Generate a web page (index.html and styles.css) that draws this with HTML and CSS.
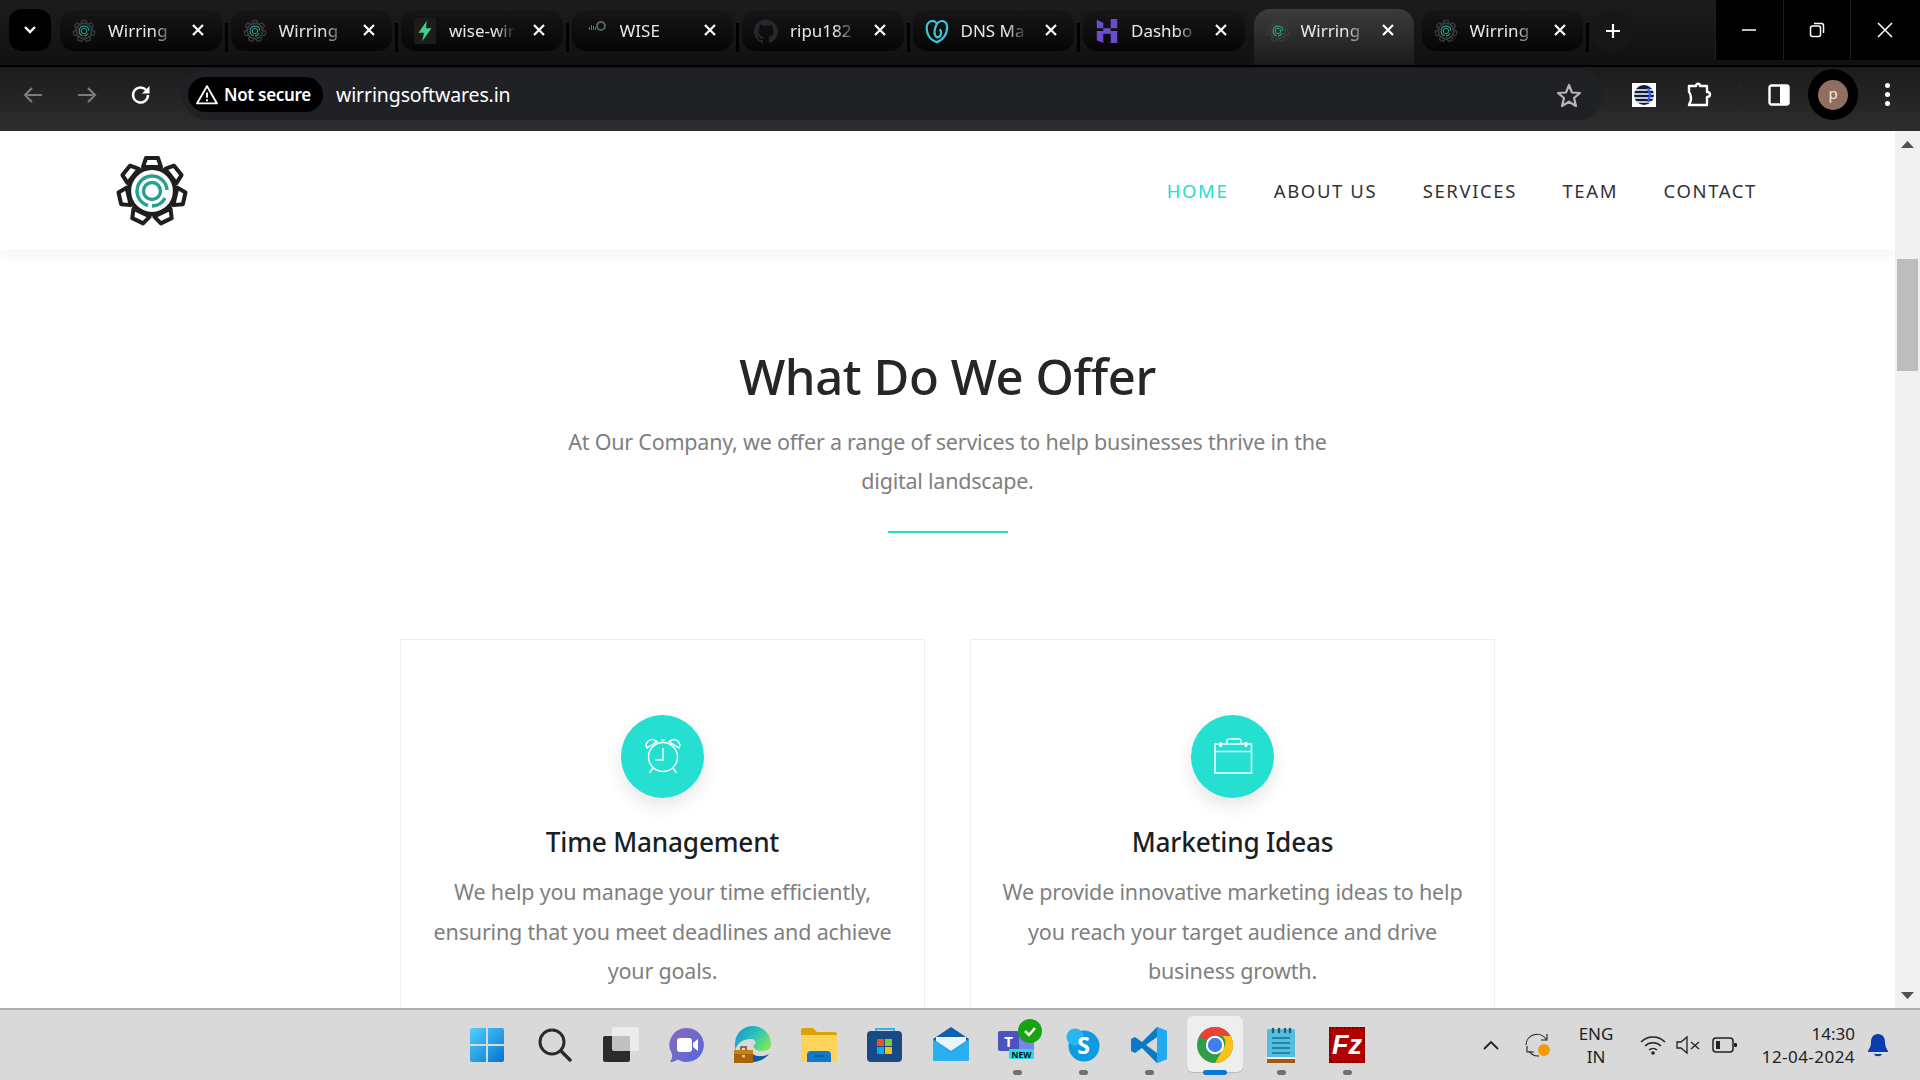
FILE: index.html
```html
<!DOCTYPE html>
<html lang="en">
<head>
<meta charset="utf-8">
<title>Wirring Softwares</title>
<link rel="stylesheet" href="styles.css">
</head>
<body>
<svg class="defs" width="0" height="0" aria-hidden="true">
  <defs>
    <g id="tooth"><polygon points="-9,-24 -6,-33 6,-33 9,-24" fill="none" stroke="currentColor" stroke-width="4" stroke-linejoin="round"/></g>
    <symbol id="gear" viewBox="-37 -37 74 74">
      <g class="gear-dark">
        <use href="#tooth"/><use href="#tooth" transform="rotate(51.4)"/><use href="#tooth" transform="rotate(102.9)"/><use href="#tooth" transform="rotate(154.3)"/><use href="#tooth" transform="rotate(205.7)"/><use href="#tooth" transform="rotate(257.1)"/><use href="#tooth" transform="rotate(308.6)"/>
        <circle r="23" fill="none" stroke="currentColor" stroke-width="4.200"/>
      </g>
      <circle r="8.5" fill="none" stroke="#26a08f" stroke-width="3.400"/>
      <path d="M-4 14.5A15 15 0 1 1 15 -1" fill="none" stroke="#26a08f" stroke-width="3.400"/>
      <path d="M13 7A15 15 0 0 1 0 15" fill="none" stroke="#26a08f" stroke-width="3.400"/>
    </symbol>
    <symbol id="close" viewBox="0 0 14 14"><path d="M2 2L12 12M12 2L2 12" stroke="#fff" stroke-width="2.2" fill="none"/></symbol>
    <linearGradient id="winblue" x1="0" y1="0" x2="1" y2="1"><stop offset="0" stop-color="#4fd0fb"/><stop offset="1" stop-color="#0574d2"/></linearGradient>
    <linearGradient id="chatg" x1="0" y1="0" x2="1" y2="1"><stop offset="0" stop-color="#8a68bd"/><stop offset="1" stop-color="#5569d8"/></linearGradient>
    <linearGradient id="edgeg" x1="0" y1="0" x2="1" y2="0.6"><stop offset="0" stop-color="#0c8fd0"/><stop offset="0.6" stop-color="#2fc7b5"/><stop offset="1" stop-color="#7ae25f"/></linearGradient>
  </defs>
</svg>

<header class="tabstrip">
  <button class="tab-toggle"><svg width="14" height="10" viewBox="0 0 14 10"><path d="M2 2L7 7L12 2" stroke="#fff" stroke-width="2.4" fill="none"/></svg></button>
  <div class="tab"><svg class="favicon gear-fav"><use href="#gear"/></svg><span class="tab-title">Wirring</span><svg class="tab-close"><use href="#close"/></svg></div><i class="tab-sep"></i>
  <div class="tab"><svg class="favicon gear-fav"><use href="#gear"/></svg><span class="tab-title">Wirring</span><svg class="tab-close"><use href="#close"/></svg></div><i class="tab-sep"></i>
  <div class="tab"><svg class="favicon" viewBox="0 0 24 28"><rect width="24" height="28" rx="3" fill="#1c1c1c"/><path d="M14 3L5 16H11L9 25L19 11H13Z" fill="#3ecf8e"/></svg><span class="tab-title">wise-wir</span><svg class="tab-close"><use href="#close"/></svg></div><i class="tab-sep"></i>
  <div class="tab"><svg class="favicon" viewBox="0 0 24 26"><path d="M5 9h1v3H5zM7 7h1v5H7zM9 8h1v4H9zM11 9h1v3h-1z" fill="#3d8a5f"/><circle cx="17" cy="8" r="4" fill="none" stroke="#4a6a55" stroke-width="2"/></svg><span class="tab-title">WISE</span><svg class="tab-close"><use href="#close"/></svg></div><i class="tab-sep"></i>
  <div class="tab"><svg class="favicon" viewBox="0 0 24 24"><path d="M12 .5a12 12 0 0 0-3.8 23.4c.6.1.8-.3.8-.6v-2.2c-3.3.7-4-1.400-4-1.400-.5-1.400-1.300-1.800-1.300-1.800-1.100-.7.1-.7.1-.7 1.200.1 1.800 1.200 1.800 1.200 1.100 1.800 2.800 1.300 3.500 1 .1-.8.400-1.300.8-1.600-2.700-.3-5.500-1.300-5.500-5.900 0-1.300.5-2.400 1.200-3.200-.1-.3-.5-1.500.1-3.200 0 0 1-.3 3.300 1.200a11.500 11.500 0 0 1 6 0c2.300-1.500 3.300-1.200 3.300-1.200.7 1.700.2 2.900.1 3.200.8.800 1.200 1.900 1.200 3.200 0 4.600-2.800 5.600-5.500 5.900.4.400.8 1.100.8 2.200v3.300c0 .3.2.7.8.6A12 12 0 0 0 12 .5z" fill="#24292f"/></svg><span class="tab-title">ripu182</span><svg class="tab-close"><use href="#close"/></svg></div><i class="tab-sep"></i>
  <div class="tab"><svg class="favicon" viewBox="0 0 26 28"><path d="M13 26C5 24 1 16 2 9C3 3 9 1 13 6C17 1 24 3 24 10C24 18 19 24 13 26ZM13 6C10 12 9 18 13 21C17 21 19 16 16 12" fill="none" stroke="#3bc4d4" stroke-width="2.400"/></svg><span class="tab-title">DNS Ma</span><svg class="tab-close"><use href="#close"/></svg></div><i class="tab-sep"></i>
  <div class="tab"><svg class="favicon" viewBox="0 0 24 28"><path d="M1 2L8 5V11L1 11ZM16 1L23 1V11H16ZM1 14H23V17H1ZM1 17H8V27L1 24ZM16 17H23V27L16 27Z" fill="#6a4ccf"/><path d="M8 11H16V14H8Z" fill="#6a4ccf"/></svg><span class="tab-title">Dashbo</span><svg class="tab-close"><use href="#close"/></svg></div><i class="tab-space"></i>
  <div class="tab active"><svg class="favicon gear-fav"><use href="#gear"/></svg><span class="tab-title">Wirring</span><svg class="tab-close"><use href="#close"/></svg></div>
  <div class="tab"><svg class="favicon gear-fav"><use href="#gear"/></svg><span class="tab-title">Wirring</span><svg class="tab-close"><use href="#close"/></svg></div><i class="tab-sep"></i>
  <button class="new-tab"><svg width="18" height="18" viewBox="0 0 18 18"><path d="M9 2V16M2 9H16" stroke="#fff" stroke-width="2.200"/></svg></button>
  <div class="window-controls">
    <span class="win-btn"><svg width="16" height="16" viewBox="0 0 16 16"><path d="M1 8H15" stroke="#fff" stroke-width="1.500"/></svg></span>
    <span class="win-btn"><svg width="16" height="16" viewBox="0 0 16 16"><rect x="1.500" y="4" width="10" height="10.500" rx="2" fill="none" stroke="#fff" stroke-width="1.500"/><path d="M5 1.500H12.500A2 2 0 0 1 14.500 3.500V11" fill="none" stroke="#fff" stroke-width="1.500"/></svg></span>
    <span class="win-btn"><svg width="16" height="16" viewBox="0 0 16 16"><path d="M1 1L15 15M15 1L1 15" stroke="#fff" stroke-width="1.500"/></svg></span>
  </div>
</header>

<div class="toolbar">
  <span class="tool-btn"><svg width="22" height="20" viewBox="0 0 22 20"><path d="M20 10H3M10 3L3 10L10 17" stroke="#7a7a7a" stroke-width="2.200" fill="none"/></svg></span>
  <span class="tool-btn"><svg width="22" height="20" viewBox="0 0 22 20"><path d="M2 10H19M12 3L19 10L12 17" stroke="#7a7a7a" stroke-width="2.200" fill="none"/></svg></span>
  <span class="tool-btn"><svg width="22" height="22" viewBox="0 0 22 22"><path d="M18 11A7.500 7.500 0 1 1 15.800 5.700L18.500 8" stroke="#fff" stroke-width="2.400" fill="none"/><path d="M19.500 2V9.500H12" fill="#fff"/></svg></span>
  <div class="omnibox">
    <span class="chip"><svg width="24" height="21" viewBox="0 0 22 20"><path d="M11 2L20.500 18.500H1.500Z" fill="none" stroke="#fff" stroke-width="1.800" stroke-linejoin="round"/><path d="M11 8V13M11 14.500V16.500" stroke="#fff" stroke-width="1.800"/></svg>Not secure</span>
    <span class="url">wirringsoftwares.in</span>
    <svg class="star" width="26" height="26" viewBox="0 0 26 26"><path d="M13 3L16 10.500L24 11L18 16L20 24L13 19.700L6 24L8 16L2 11L10 10.500Z" fill="none" stroke="#b5b5b5" stroke-width="2.200" stroke-linejoin="round"/></svg>
  </div>
  <span class="ext-btn"><svg width="24" height="24" viewBox="0 0 24 24"><rect width="24" height="24" fill="#fff"/><circle cx="12" cy="12" r="10" fill="#10183c"/><path d="M0 7H24M0 11H24M0 15H24M0 19H24" stroke="#fff" stroke-width="1.500"/><path d="M16 5L18 12L16 19" stroke="#2a62e8" stroke-width="2" fill="none"/></svg></span>
  <span class="ext-btn narrow"><svg width="26" height="26" viewBox="0 0 26 26"><path d="M3 4H10C10 1 14 1 14 4H21V10C25 10 25 15 21 15V23H3L5 18C5 15 5 12 3 10Z" fill="none" stroke="#fff" stroke-width="2.400" stroke-linejoin="round"/></svg></span>
  <i class="tool-sep"></i>
  <span class="ext-btn"><svg width="22" height="22" viewBox="0 0 22 22"><rect x="1.500" y="1.500" width="19" height="19" rx="2" fill="none" stroke="#fff" stroke-width="2.400"/><rect x="12" y="1.500" width="8.500" height="19" fill="#fff"/></svg></span>
  <span class="avatar-wrap"><span class="avatar">p</span></span>
  <span class="dots-btn"><i></i><i></i><i></i></span>
</div>

<div class="viewport">
  <main class="page">
    <nav class="site-nav">
      <svg class="logo"><use href="#gear"/></svg>
      <ul class="menu">
        <li class="current">HOME</li>
        <li>ABOUT US</li>
        <li>SERVICES</li>
        <li>TEAM</li>
        <li>CONTACT</li>
      </ul>
    </nav>
    <section class="offer">
      <h1>What Do We Offer</h1>
      <p class="lead">At Our Company, we offer a range of services to help businesses thrive in the digital landscape.</p>
      <hr class="rule">
      <div class="cards">
        <article class="card">
          <div class="badge">
            <svg width="44" height="44" viewBox="-22 -22 44 44" fill="none" stroke="#fff" stroke-width="1.400">
              <circle cx="0" cy="0" r="14.500"/>
              <path d="M0 -9V3H-8"/>
              <path d="M-16 -9C-18.500 -13 -15 -18 -10 -17.500L-6 -15.500Z"/>
              <path d="M16 -9C18.500 -13 15 -18 10 -17.500L6 -15.500Z"/>
              <path d="M-10 11L-13.500 16M10 11L13.500 16M-2 -17H2"/>
            </svg>
          </div>
          <h2>Time Management</h2>
          <p>We help you manage your time efficiently, ensuring that you meet deadlines and achieve your goals.</p>
        </article>
        <article class="card">
          <div class="badge">
            <svg width="44" height="44" viewBox="-22 -22 44 44" fill="none" stroke="#fff" stroke-width="1.500">
              <rect x="-18" y="-13" width="36.500" height="29"/>
              <path d="M-18 -5.500H18.500"/>
              <path d="M-6 -13V-16A2 2 0 0 1 -4 -18H6A2 2 0 0 1 8 -16V-13"/>
              <path d="M-12.500 -15V-10M13 -15V-10" stroke-width="2.600"/>
            </svg>
          </div>
          <h2>Marketing Ideas</h2>
          <p>We provide innovative marketing ideas to help you reach your target audience and drive business growth.</p>
        </article>
      </div>
    </section>
  </main>
  <aside class="scrollbar">
    <svg width="13" height="7" viewBox="0 0 13 7"><path d="M6.500 0L13 7H0Z" fill="#505050"/></svg>
    <div class="thumb"></div>
    <svg class="arrow-down" width="13" height="7" viewBox="0 0 13 7"><path d="M6.500 7L13 0H0Z" fill="#505050"/></svg>
  </aside>
</div>

<footer class="taskbar">
  <div class="dock">
    <span class="dock-item win-start"><svg width="36" height="36" viewBox="0 0 36 36"><path d="M1 3A2 2 0 0 1 3 1H17V17H1ZM19 1H33A2 2 0 0 1 35 3V17H19ZM1 19H17V35H3A2 2 0 0 1 1 33ZM19 19H35V33A2 2 0 0 1 33 35H19Z" fill="url(#winblue)"/></svg></span>
    <span class="dock-item"><svg width="34" height="36" viewBox="0 0 34 36"><circle cx="14" cy="15" r="12" fill="none" stroke="#2b2b2b" stroke-width="3"/><path d="M23 24L32 33" stroke="#2b2b2b" stroke-width="3.400" stroke-linecap="round"/></svg></span>
    <span class="dock-item"><svg width="38" height="36" viewBox="0 0 38 36"><rect x="1" y="9" width="27" height="26" rx="2" fill="#2c2c2c"/><rect x="10" y="0" width="27" height="24" rx="2" fill="#f1f1f1" fill-opacity=".75"/></svg></span>
    <span class="dock-item"><svg width="36" height="36" viewBox="0 0 36 36"><path d="M18 1A17 17 0 1 1 9 32.500C6 34.500 3 35 1 35C3 32 3.500 30 3 27A17 17 0 0 1 18 1Z" fill="url(#chatg)"/><rect x="8" y="11" width="15" height="14" rx="3" fill="#fff"/><path d="M24 16L29 12V24L24 20Z" fill="#fff"/></svg></span>
    <span class="dock-item"><svg width="38" height="38" viewBox="0 0 38 38"><path d="M1 17C2 6 10 0 19 0C29 0 37 8 37 18C37 23 33 25 28 25C23 25 20 23 19 20C23 18 22 13 17 13C9 13 3 17 1 25Z" fill="url(#edgeg)"/><path d="M19 36C25 36 31 33 35 28C30 31 22 31 19 28V36Z" fill="#0c59a4"/><path d="M0 26H19V37H0Z" fill="#a8640f"/><path d="M0 24H19V28H0Z" fill="#c77e1d"/><path d="M7 24V21H12V24" fill="none" stroke="#7c4a0e" stroke-width="1.500"/><rect x="8" y="29" width="3" height="2.500" fill="#f0c060"/></svg></span>
    <span class="dock-item"><svg width="36" height="36" viewBox="0 0 36 36"><path d="M0 3A2 2 0 0 1 2 1H12L16 5H34A2 2 0 0 1 36 7V12H0Z" fill="#dda300"/><path d="M0 8H36V34A1 1 0 0 1 35 35H1A1 1 0 0 1 0 34Z" fill="#fdd35c"/><path d="M6 35V28A4 4 0 0 1 10 24H26A4 4 0 0 1 30 28V35Z" fill="#0f78c8"/><path d="M13 29H23" stroke="#0a5799" stroke-width="1.600"/></svg></span>
    <span class="dock-item"><svg width="36" height="38" viewBox="0 0 36 38"><path d="M9 8V3H27V8" fill="none" stroke="#2fb6ec" stroke-width="2"/><rect x="0" y="5" width="35" height="31" rx="4" fill="#1a4a85"/><rect x="10" y="13" width="7" height="7" fill="#f1511b"/><rect x="18" y="13" width="7" height="7" fill="#80cc28"/><rect x="10" y="21" width="7" height="7" fill="#00adef"/><rect x="18" y="21" width="7" height="7" fill="#fbbc09"/></svg></span>
    <span class="dock-item"><svg width="36" height="36" viewBox="0 0 36 36"><path d="M0 12L18 0L36 12V30H0Z" fill="#0d5fb0"/><path d="M0 12L18 24L36 12V33H0Z" fill="#2aa7ea"/><path d="M3 10H33V14L18 24L3 14Z" fill="#e8f5fb"/><path d="M0 14L18 26L36 14V33A1 1 0 0 1 35 34H1A1 1 0 0 1 0 33Z" fill="#29b0ef"/></svg></span>
    <span class="dock-item has-run">
      <span class="teams">
        <svg width="46" height="46" viewBox="0 0 46 46"><rect x="21" y="8" width="15" height="26" rx="2" fill="#7b83eb"/><rect x="0" y="12" width="21" height="20" rx="2" fill="#4b53bc"/><text x="10.500" y="28" class="teams-t">T</text><circle cx="32" cy="12" r="12" fill="#16a314"/><path d="M27 12L31 16L37 9" stroke="#fff" stroke-width="2.500" fill="none"/><rect x="11" y="30" width="25" height="10" rx="1" fill="#26dde6"/><text x="23.500" y="38.500" class="teams-new">NEW</text></svg>
      </span>
    </span>
    <span class="dock-item has-run"><svg width="34" height="34" viewBox="0 0 34 34"><circle cx="18" cy="18" r="15.500" fill="#0e9ae0"/><circle cx="9" cy="9" r="8.500" fill="#2bb5f0"/><text x="17.500" y="25.500" class="skype-s">S</text></svg></span>
    <span class="dock-item has-run"><svg width="36" height="36" viewBox="0 0 36 36"><path d="M26 0L36 4V32L26 36L11 21L4 26L0 24V12L4 10L11 15Z" fill="#0b7ac4"/><path d="M26 0L36 4V32L26 36Z" fill="#23a9f2"/><path d="M26 10L15 18L26 26Z" fill="#d8d8d8"/></svg></span>
    <span class="dock-item chrome-tile"><svg width="36" height="36" viewBox="0 0 36 36"><circle cx="18" cy="18" r="18" fill="#2f9e48"/><path d="M18 0A18 18 0 0 1 33.600 9H18A9 9 0 0 0 10 13.500L2.500 9A18 18 0 0 1 18 0Z" fill="#ea4335"/><path d="M33.600 9A18 18 0 0 1 18 36L26 22A9 9 0 0 0 25.500 9Z" fill="#fbc217"/><circle cx="18" cy="18" r="9.200" fill="#fff"/><circle cx="18" cy="18" r="7.200" fill="#3f7fe8"/></svg></span>
    <span class="dock-item has-run"><svg width="28" height="36" viewBox="0 0 28 36"><path d="M0 30H28V36H0Z" fill="#a8560f"/><path d="M0 4A2 2 0 0 1 2 2H26A2 2 0 0 1 28 4V30H0Z" fill="#55bede"/><path d="M0 30H28V32H0Z" fill="#efefef"/><path d="M6 2V5M12 2V5M18 2V5M23 2V5" stroke="#135f7f" stroke-width="2.400" stroke-linecap="round"/><path d="M5 11H23M5 16H23M5 21H23M5 26H23" stroke="#13709a" stroke-width="1.600"/></svg></span>
    <span class="dock-item has-run"><span class="filezilla">Fz</span></span>
  </div>
  <div class="tray">
    <span class="tray-cell caret"><svg width="18" height="10" viewBox="0 0 18 10"><path d="M2 9L9 2L16 9" stroke="#222" stroke-width="1.800" fill="none"/></svg></span>
    <span class="tray-cell sync"><svg width="26" height="26" viewBox="0 0 26 26"><path d="M1 13A11 11 0 0 1 21 7M22 2V8H16M4 19A11 11 0 0 0 14 24M2 14V20H9" fill="none" stroke="#222" stroke-width="1.100"/><circle cx="19" cy="18" r="6" fill="#f59a0c"/></svg></span>
    <span class="tray-cell lang"><span>ENG</span><span>IN</span></span>
    <span class="tray-cell wifi"><svg width="26" height="20" viewBox="0 0 26 20"><path d="M1 7A17 17 0 0 1 25 7M5 11A11.500 11.500 0 0 1 21 11M9 15A6 6 0 0 1 17 15" fill="none" stroke="#222" stroke-width="1.500"/><circle cx="13" cy="18" r="1.800" fill="#222"/></svg></span>
    <span class="tray-cell speaker"><svg width="24" height="20" viewBox="0 0 24 20"><path d="M1 7H5L11 2V18L5 13H1Z" fill="none" stroke="#222" stroke-width="1.300"/><path d="M15 7L23 14M23 7L15 14" stroke="#222" stroke-width="1.300"/></svg></span>
    <span class="tray-cell battery"><svg width="26" height="18" viewBox="0 0 26 18"><rect x="1" y="2" width="20" height="14" rx="3" fill="none" stroke="#222" stroke-width="1.500"/><rect x="4" y="5" width="4" height="8" fill="#222"/><rect x="22" y="7" width="3" height="4" rx="1" fill="#222"/></svg></span>
    <span class="tray-cell clock"><span>14:30</span><span class="clock-date">12-04-2024</span></span>
    <span class="tray-cell bell"><svg width="22" height="24" viewBox="0 0 22 24"><path d="M11 1C6 1 4 5 4 9C4 14 2 16 1 18V19H21V18C20 16 18 14 18 9C18 5 16 1 11 1Z" fill="#0a3eb0"/><path d="M7 21H15C14 24 8 24 7 21Z" fill="#0a3eb0"/></svg></span>
  </div>
</footer>
</body>
</html>
```

FILE: styles.css
```css
* { box-sizing: border-box; }
html, body { margin: 0; height: 100%; }
body {
  width: 1920px;
  height: 1080px;
  overflow: hidden;
  display: flex;
  flex-direction: column;
  font-family: "Noto Sans", "Open Sans", sans-serif;
  background: #fff;
}
.defs { position: absolute; }

/* Tab strip */
.tabstrip {
  height: 67px;
  flex: none;
  display: flex;
  align-items: flex-start;
  padding: 10px 0 0 9px;
  background: linear-gradient(#1c1c1c, #111);
  border-bottom: 2px solid #000;
  position: relative;
}
.tab-toggle {
  width: 42px;
  height: 42px;
  margin: -1px 9px 0 0;
  border: 0;
  border-radius: 13px;
  background: #000;
  display: flex;
  align-items: center;
  justify-content: center;
  padding: 0;
}
.tab {
  width: 161.5px;
  height: 41px;
  flex: none;
  display: flex;
  align-items: center;
  padding-left: 12px;
  border-radius: 14px;
  background: linear-gradient(#161616, #060606);
  color: #e8e8e8;
  font-size: 17px;
}
.tab.active {
  width: 160px;
  height: 56px;
  margin: -1px 8px 0 0;
  padding-bottom: 13px;
  border-radius: 16px 16px 0 0;
  background: linear-gradient(#3c3c3c, #1b1b1b);
}
.favicon { width: 24px; height: 26px; flex: none; margin-right: 12px; }
.gear-fav { width: 24px; height: 24px; color: #3a3a3a; }
.gear-dark { color: inherit; }
.tab-title {
  width: 67px;
  flex: none;
  white-space: nowrap;
  -webkit-mask-image: linear-gradient(90deg, #000 68%, transparent);
  mask-image: linear-gradient(90deg, #000 68%, transparent);
}
.tab-close { width: 14px; height: 14px; flex: none; margin: -1px 0 0 16px; }
.tab.active .tab-close { margin-left: 13px; }
.tab.active .tab-title { margin-left: -1px; }
.tab-sep { width: 3px; height: 29px; margin: 13px 3px 0; flex: none; background: #000; }
.tab-space { width: 9px; flex: none; }
.new-tab {
  width: 41px;
  height: 41px;
  padding: 0;
  border: 0;
  border-radius: 50%;
  background: #171717;
  display: flex;
  align-items: center;
  justify-content: center;
}
.window-controls {
  margin: -10px 0 0 auto;
  width: 205px;
  height: 60px;
  display: flex;
  background: #000;
  padding-right: 2px;
}
.win-btn {
  flex: 1;
  display: flex;
  align-items: center;
  justify-content: center;
  border-left: 1px solid #1e1e1e;
}

/* Toolbar */
.toolbar {
  height: 64px;
  flex: none;
  display: flex;
  align-items: flex-start;
  padding: 2px 0 0 6px;
  background: linear-gradient(#1c1c1e, #2d2d2d);
}
.tool-btn {
  width: 54px;
  height: 51px;
  flex: none;
  display: flex;
  align-items: center;
  justify-content: center;
}
.omnibox {
  width: 1422px;
  height: 51px;
  margin-left: 14px;
  flex: none;
  display: flex;
  align-items: center;
  padding: 0 10px 0 6px;
  border-radius: 26px;
  background: #202125;
  color: #fff;
}
.chip {
  width: 135px;
  height: 35px;
  padding-right: 5px;
  display: flex;
  align-items: center;
  justify-content: center;
  gap: 5px;
  border-radius: 18px;
  background: #000;
  font-size: 17px;
  font-weight: 600;
  letter-spacing: -.3px;
}
.url { margin-left: 13px; font-size: 19.500px; letter-spacing: -.13px; }
.star { margin-left: auto; margin-right: 12px; }
.ext-btn {
  width: 56px;
  height: 51px;
  margin-left: 12px;
  flex: none;
  display: flex;
  align-items: center;
  justify-content: center;
}
.ext-btn.narrow { width: 54px; margin-left: 0; }
.tool-sep + .ext-btn { margin-left: 10px; }
.tool-sep { width: 2px; height: 26px; margin: 12px 0 0 13px; flex: none; background: #242424; }
.avatar-wrap {
  width: 50px;
  height: 51px;
  flex: none;
  margin-left: 1px;
  display: flex;
  align-items: center;
  justify-content: center;
  border-radius: 50%;
  background: #000;
}
.avatar {
  width: 30px;
  height: 30px;
  padding-bottom: 3px;
  display: flex;
  align-items: center;
  justify-content: center;
  border-radius: 50%;
  background: #8f6f62;
  color: #f3e9e4;
  font-size: 15px;
}
.dots-btn {
  width: 54px;
  height: 51px;
  margin-left: 2px;
  flex: none;
  display: flex;
  flex-direction: column;
  align-items: center;
  justify-content: center;
  gap: 4px;
}
.dots-btn i { width: 5px; height: 5px; border-radius: 50%; background: #fff; }

/* Viewport */
.viewport { flex: 1; display: flex; min-height: 0; }
.page { flex: 1; min-width: 0; overflow: hidden; background: #fff; }
.site-nav {
  height: 119px;
  display: flex;
  align-items: center;
  padding: 0 138px 0 115px;
  box-shadow: 0 0 20px rgba(0, 0, 0, .08);
  position: relative;
}
.logo { width: 74px; height: 74px; color: #1e1e1e; }
.menu {
  margin: 0 0 0 auto;
  padding: 0;
  list-style: none;
  display: flex;
  gap: 45.500px;
  font-size: 18.500px;
  letter-spacing: 1.600px;
  color: #333;
}
.menu .current { color: #25dccd; }

.offer { display: flex; flex-direction: column; align-items: center; padding-top: 96px; }
.offer h1 {
  margin: 0;
  font-size: 49px;
  line-height: 60px;
  font-weight: 500;
  color: #262626;
  letter-spacing: -.4px;
}
.lead {
  width: 790px;
  margin: 16px 0 0;
  text-align: center;
  font-size: 21.500px;
  line-height: 39px;
  color: #808080;
  letter-spacing: -.23px;
}
.rule { width: 120px; height: 2px; margin: 31px 0 0; border: 0; background: #25dccd; }
.cards { display: flex; gap: 45px; margin-top: 106px; }
.card {
  width: 525px;
  height: 600px;
  border: 1px solid #eeeeee;
  display: flex;
  flex-direction: column;
  align-items: center;
  padding: 75px 30px 0;
  text-align: center;
}
.badge {
  width: 83px;
  height: 83px;
  border-radius: 50%;
  background: #25dfd0;
  box-shadow: 0 8px 18px rgba(0, 0, 0, .1);
  display: flex;
  align-items: center;
  justify-content: center;
}
.card h2 {
  margin: 17.500px 0 0;
  font-size: 26.200px;
  line-height: 52px;
  font-weight: 500;
  color: #1b1f24;
  letter-spacing: -.2px;
}
.card p {
  margin: 4.500px 0 0;
  font-size: 21.500px;
  line-height: 39.500px;
  color: #808080;
  letter-spacing: -.18px;
}

/* Scrollbar */
.scrollbar {
  width: 25px;
  flex: none;
  display: flex;
  flex-direction: column;
  align-items: center;
  padding-top: 10px;
  background: #f1f1f1;
}
.thumb { width: 21px; height: 112px; margin-top: 111px; background: #bdbdbd; }
.arrow-down { margin-top: auto; margin-bottom: 9px; }

/* Taskbar */
.taskbar {
  height: 72px;
  flex: none;
  display: flex;
  border-top: 2px solid #b0b0b0;
  background: #d9d9d9;
  color: #222;
  padding-left: 456px;
}
.dock { display: flex; }
.dock-item {
  width: 66px;
  height: 70px;
  flex: none;
  display: flex;
  align-items: center;
  justify-content: center;
  position: relative;
}
.win-start svg { margin-left: -4px; }
.has-run::after {
  content: "";
  position: absolute;
  bottom: 5px;
  left: 50%;
  width: 9px;
  height: 5px;
  margin-left: -4.500px;
  border-radius: 3px;
  background: #6f6f6f;
}
.chrome-tile::before {
  content: "";
  position: absolute;
  top: 6px;
  left: 5px;
  width: 56px;
  height: 56px;
  border-radius: 6px;
  background: #eeeeee;
  box-shadow: 0 1px 1px rgba(0, 0, 0, .15);
}
.chrome-tile svg { position: relative; }
.chrome-tile::after {
  content: "";
  position: absolute;
  bottom: 5px;
  left: 21px;
  width: 24px;
  height: 5px;
  border-radius: 3px;
  background: #0a78d4;
}
.teams { display: flex; margin: -6px 0 0 8px; }
.teams-t { font: 700 15px "Noto Sans", sans-serif; fill: #fff; text-anchor: middle; }
.teams-new { font: 700 8.500px "Noto Sans", sans-serif; fill: #111; text-anchor: middle; }
.skype-s { font: 700 23px "Noto Sans", sans-serif; fill: #fff; text-anchor: middle; }
.filezilla {
  width: 36px;
  height: 36px;
  display: flex;
  align-items: center;
  justify-content: center;
  background: #b20000;
  border: 2px dotted #7d0000;
  color: #fff;
  font: italic 700 27px/1 "Liberation Sans", sans-serif;
}
.tray { margin-left: auto; padding-right: 24px; display: flex; }
.tray-cell { height: 70px; flex: none; display: flex; align-items: center; justify-content: center; }
.caret { width: 42px; }
.sync { width: 52px; }
.lang {
  width: 72px;
  padding-right: 8px;
  flex-direction: column;
  font-size: 17px;
  line-height: 23px;
}
.wifi { width: 34px; }
.speaker { width: 36px; }
.battery { width: 38px; }
.clock {
  width: 116px;
  padding-right: 5px;
  flex-direction: column;
  align-items: flex-end;
  font-size: 17px;
  line-height: 23px;
}
.clock-date { letter-spacing: .45px; }
.bell { width: 36px; }
```
